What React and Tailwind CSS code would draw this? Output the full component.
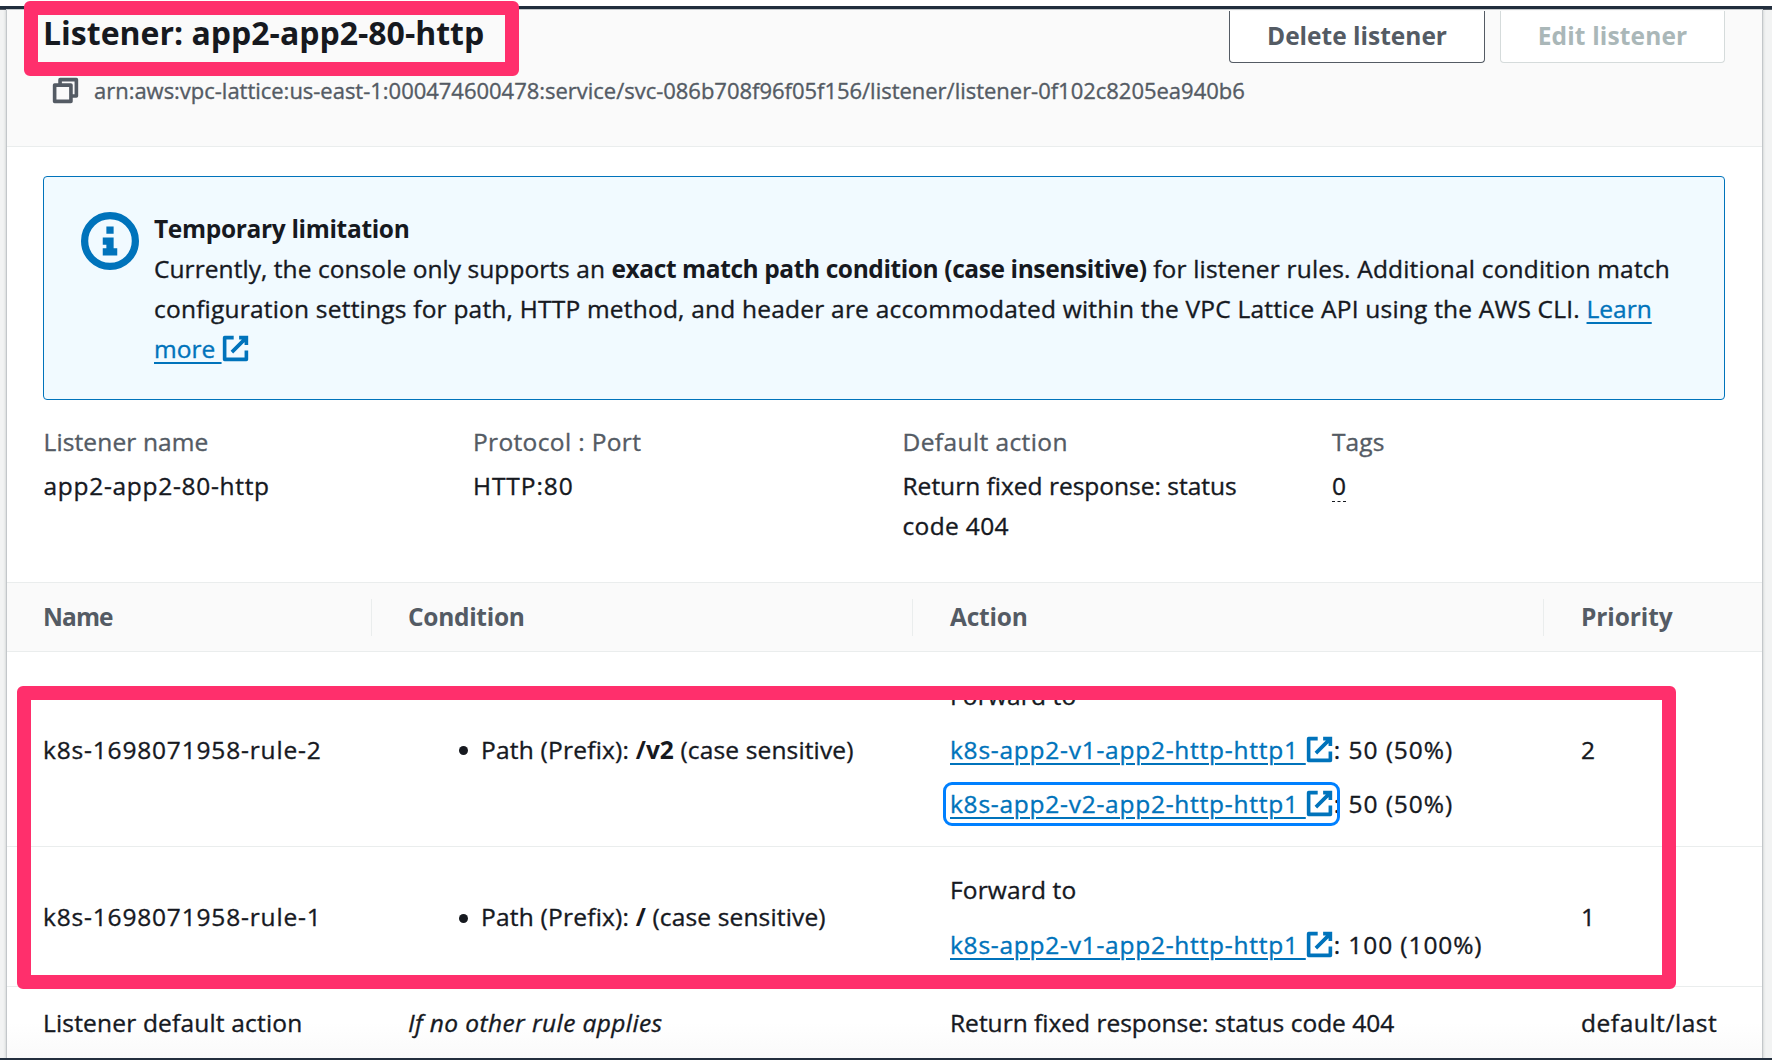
const cols = "grid grid-cols-[365px_541px_631px_218px]";
const bold = "font-bold [-webkit-text-stroke:0px]";

function ExternalIcon() {
  return (
    <svg viewBox="0 0 16 16" fill="none" stroke="currentColor" strokeWidth="2" strokeLinejoin="round" className="-ml-px inline-block size-[29px] align-[-5px]">
      <path d="M10 2h4v4M6 10l8-8" strokeLinejoin="miter" />
      <path d="M14 9.05V14H2V2h5" />
    </svg>
  );
}

function CopyIcon() {
  return (
    <svg viewBox="0 0 16 16" fill="none" stroke="currentColor" strokeWidth="2" strokeLinejoin="round" className="size-[29px] shrink-0">
      <path d="M2 5h9v9H2z" />
      <path d="M5 5V2h9v9h-3" />
    </svg>
  );
}

function InfoIcon() {
  return (
    <svg viewBox="0 0 16 16" fill="none" stroke="currentColor" strokeWidth="2" className="mt-[3px] size-[58px] shrink-0 text-[#0073bb]">
      <circle cx="8" cy="8" r="7" />
      <path d="M8 12V8H6M10 11H6M8 6V4" />
    </svg>
  );
}

const linkText =
  "whitespace-pre underline decoration-2 underline-offset-[4px]";

function Target({ name, weight, weightClass, focused }) {
  return (
    <div className="flex">
      <a className="relative text-[#0073bb]">
        <span className={linkText + " tracking-[0.75px]"}>{name + " "}</span>
        <ExternalIcon />
        {focused && <span className="absolute -top-[2px] -left-[7px] h-[44px] w-[397px] rounded-[9px] border-[3px] border-[#0080ff]" />}
      </a>
      <span className={"whitespace-pre " + weightClass}>{": " + weight}</span>
    </div>
  );
}

function Condition({ path }) {
  return (
    <div className="flex items-center pl-[87px]">
      <span className="mr-[13px] size-[9px] translate-y-px rounded-full bg-[#16191f]" />
      <span className="whitespace-pre">
        <span className="tracking-[0.22px]">Path (Prefix): </span>
        <b className={bold}>{path}</b>
        <span className="tracking-[0.15px]"> (case sensitive)</span>
      </span>
    </div>
  );
}

function Field({ label, children }) {
  return (
    <div className="w-[429.5px]">
      <div className="mb-[4px] tracking-[0.12px] text-[#545b64]">{label}</div>
      {children}
    </div>
  );
}

function HeadCell({ children, divider, className = "" }) {
  return (
    <div className="flex items-center">
      <span className={"flex-1 " + bold + " " + className}>{children}</span>
      {divider && <span className="h-[37px] w-px bg-[#eaeded]" />}
    </div>
  );
}

export default function App() {
  return (
    <div className="relative flex h-[1060px] w-[1772px] flex-col overflow-hidden bg-white font-['Open_Sans',sans-serif] text-[24.5px] leading-[40px] text-[#16191f] [-webkit-text-stroke:0.35px]">
      <div className="mt-[6px] h-[4px] shrink-0 border-b border-[#545b64] bg-[#232f3e]" />
      <main className="flex min-h-0 flex-1 bg-[#f2f3f3] pr-[10px] pl-[7px]">
        <section className="flex-1 bg-white shadow-[0_0_0_1px_#c3c7ca,0_0_3px_1px_rgba(0,28,36,0.2)]">
          <header className="h-[137px] border-b border-[#eaeded] bg-[#fafafa] pr-[37px] pl-[36px]">
            <div className="flex h-[53px] items-start justify-between">
              <h1 className={"mt-[3px] text-[32px] " + bold}>Listener: app2-app2-80-http</h1>
              <div className={"mt-px flex gap-[15px] " + bold}>
                <button className="h-[52px] w-[256px] rounded-b-[4px] border border-t-0 border-[#545b64] bg-white pb-[2px] text-[#545b64]">Delete listener</button>
                <button className="h-[52px] w-[225px] rounded-b-[4px] border border-t-0 border-[#d5dbdb] bg-white pb-[2px] tracking-[0.15px] text-[#aab7b8]">Edit listener</button>
              </div>
            </div>
            <div className="mt-[7px] flex items-center gap-[14px] pl-[8px] text-[22px] text-[#545b64]">
              <CopyIcon />
              <span className="tracking-[-0.02px]">arn:aws:vpc-lattice:us-east-1:000474600478:service/svc-086b708f96f05f156/listener/listener-0f102c8205ea940b6</span>
            </div>
          </header>

          <div className="mr-[37px] ml-[36px] mt-[29px] flex h-[224px] gap-[15px] rounded-[4px] border border-[#0073bb] bg-[#f1faff] pt-[32px] pl-[37px]">
            <InfoIcon />
            <div className="whitespace-pre">
              <div className={bold + " tracking-[-0.33px]"}>Temporary limitation</div>
              <div>
                <span className="tracking-[0.06px]">Currently, the console only supports an </span>
                <b className={bold + " tracking-[-0.4px]"}>exact match path condition (case insensitive)</b>
                <span className="tracking-[0.18px]"> for listener rules. Additional condition match</span>
              </div>
              <div>
                <span className="tracking-[0.21px]">configuration settings for path, HTTP method, and header are accommodated within the VPC Lattice API using the AWS CLI. </span>
                <a className={linkText + " text-[#0073bb]"}>Learn</a>
              </div>
              <a className="text-[#0073bb]">
                <span className={linkText}>{"more "}</span>
                <ExternalIcon />
              </a>
            </div>
          </div>

          <div className="flex h-[182px] pt-[22px] pl-[36.5px]">
            <Field label="Listener name"><span className="tracking-[0.7px]">app2-app2-80-http</span></Field>
            <Field label={<span className="tracking-[0.35px]">Protocol : Port</span>}><span className="tracking-[0.9px]">HTTP:80</span></Field>
            <Field label={<span className="tracking-[0.4px]">Default action</span>}>Return fixed response: status<br /><span className="tracking-[0.35px]">code 404</span></Field>
            <Field label="Tags">
              <span className="inline-block h-[36px] border-b border-dashed border-[#16191f]">0</span>
            </Field>
          </div>

          <div className={cols + " h-[70px] border-y border-[#eaeded] bg-[#fafafa] text-[#545b64]"}>
            <HeadCell divider className="pl-[36px] tracking-[-0.9px]">Name</HeadCell>
            <HeadCell divider className="pl-[36px] tracking-[-0.3px]">Condition</HeadCell>
            <HeadCell divider className="pl-[37px] tracking-[-0.2px]">Action</HeadCell>
            <HeadCell className="pl-[37px] tracking-[-0.1px]">Priority</HeadCell>
          </div>

          <div className={cols + " h-[195px] items-center border-b border-[#eaeded] pt-px"}>
            <div className="pl-[36px] tracking-[0.82px]">k8s-1698071958-rule-2</div>
            <Condition path="/v2" />
            <div className="flex flex-col gap-[14px] pl-[37px]">
              <div className="tracking-[0.15px]">Forward to</div>
              <Target name="k8s-app2-v1-app2-http-http1" weight="50 (50%)" weightClass="tracking-[0.95px]" />
              <Target name="k8s-app2-v2-app2-http-http1" weight="50 (50%)" weightClass="tracking-[0.95px]" focused />
            </div>
            <div className="pl-[37px]">2</div>
          </div>

          <div className={cols + " h-[140px] items-center border-b border-[#eaeded] pt-px"}>
            <div className="pl-[36px] tracking-[0.82px]">k8s-1698071958-rule-1</div>
            <Condition path="/" />
            <div className="flex flex-col gap-[15px] pl-[37px]">
              <div className="tracking-[0.15px]">Forward to</div>
              <Target name="k8s-app2-v1-app2-http-http1" weight="100 (100%)" weightClass="tracking-[0.9px]" />
            </div>
            <div className="pl-[37px]">1</div>
          </div>

          <div className={cols + " h-[71px] bg-linear-to-b from-white from-50% to-[#fafafa] pt-[16px]"}>
            <div className="pl-[36px] tracking-[0.18px]">Listener default action</div>
            <div className="pl-[36px] tracking-[0.4px] italic">If no other rule applies</div>
            <div className="pl-[37px]">Return fixed response: status code 404</div>
            <div className="pl-[37px] tracking-[0.55px]">default/last</div>
          </div>
        </section>
      </main>
      <div className="relative h-[2px] shrink-0 bg-[#232f3e]" />

      <div className="absolute top-px left-[24px] h-[75px] w-[495px] rounded-[6px] border-[14px] border-[#ff2f6c]" />
      <div className="absolute top-[686px] left-[16.5px] h-[303px] w-[1659px] rounded-[6px] border-[14px] border-[#ff2f6c]" />
    </div>
  );
}
